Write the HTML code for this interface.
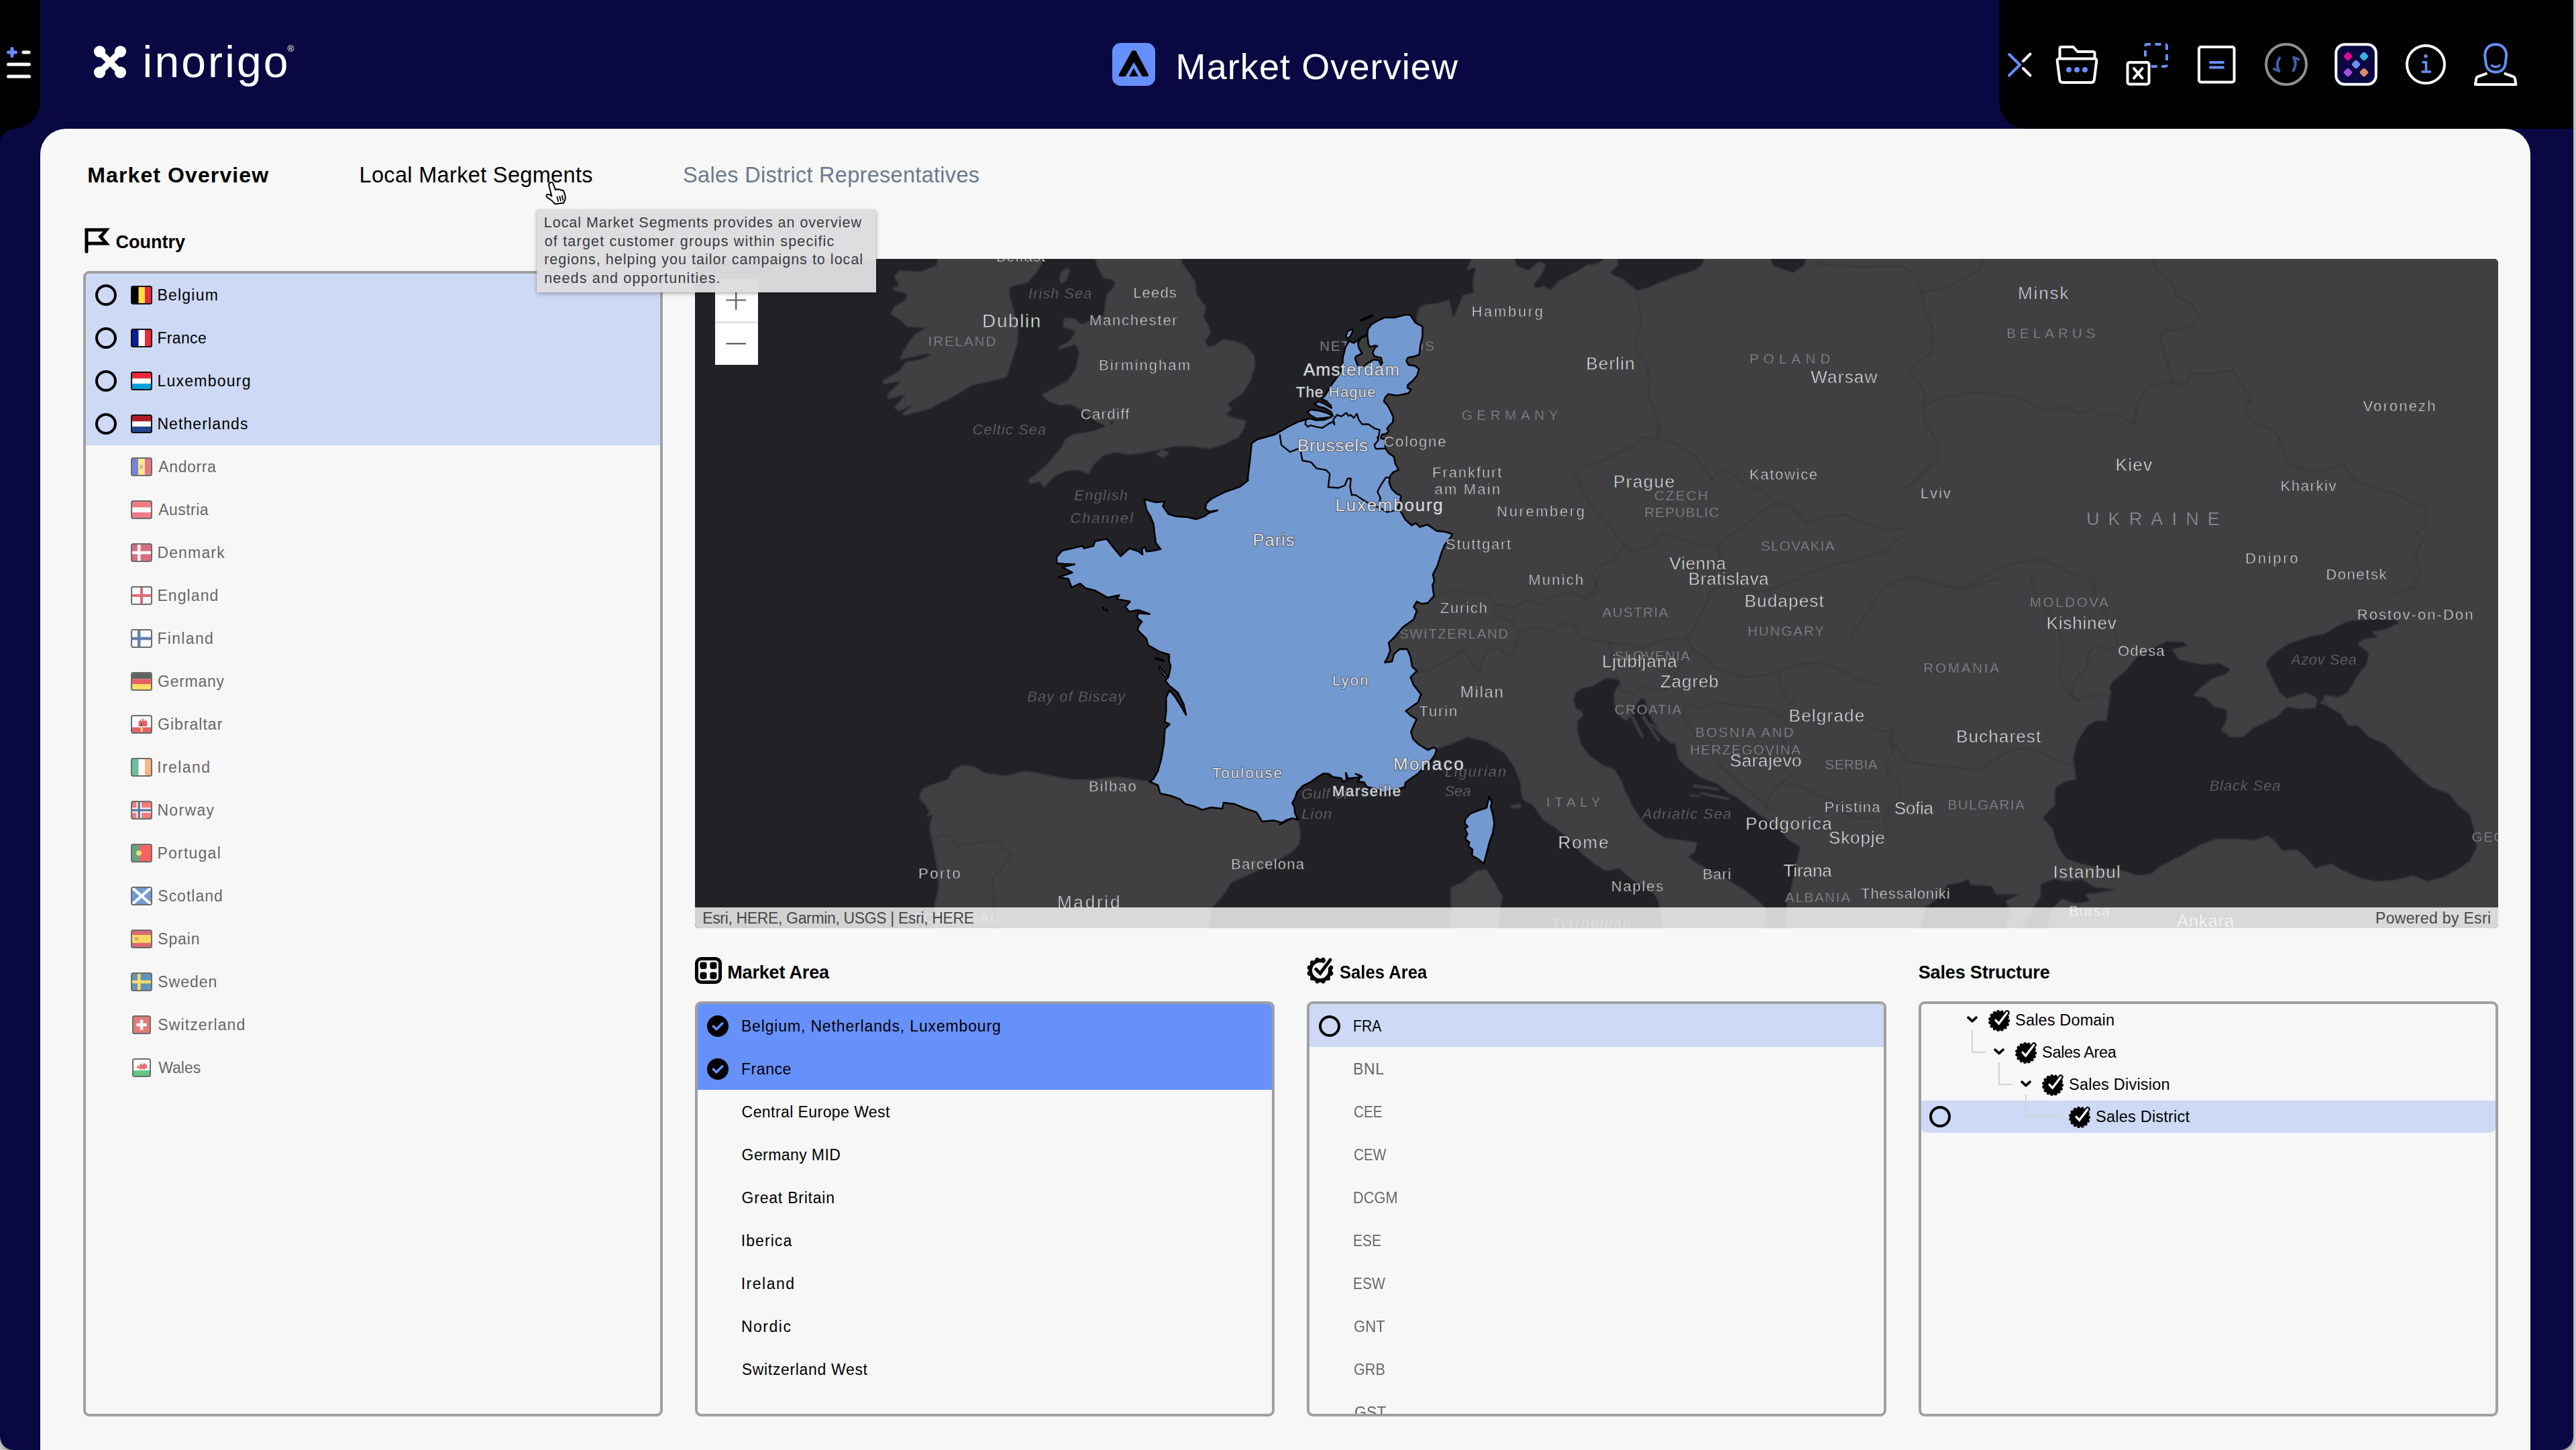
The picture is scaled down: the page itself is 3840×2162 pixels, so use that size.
<!DOCTYPE html>
<html lang="en"><head><meta charset="utf-8"><title>Market Overview</title>
<style>
*{box-sizing:border-box}
html,body{margin:0;padding:0}
body{width:3840px;height:2162px;overflow:hidden;background:#e9e9e9;font-family:'Liberation Sans',sans-serif;position:relative}
.t{position:absolute;white-space:nowrap;line-height:1}
.abs{position:absolute}
#win{position:absolute;left:0;top:0;width:3836px;height:2162px;background:#0a0842;border-radius:0 0 20px 20px;overflow:hidden}
#shadow{position:absolute;left:0;top:-40px;width:3836px;height:2202px;border-radius:0 0 20px 20px;box-shadow:0 6px 14px rgba(0,0,0,.45)}
#panel{position:absolute;left:60px;top:192px;width:3712px;height:1990px;background:#f7f7f7;border-radius:38px 38px 0 0}
.box{position:absolute;border:4px solid #a0a0a0;border-radius:9px;background:#f7f7f7;overflow:hidden}
.row{position:absolute;left:0;right:0}
.radio{position:absolute;width:32px;height:32px;border:4px solid #000;border-radius:50%}
.flag{position:absolute;width:32px;height:28px}
.dis{opacity:.62}
svg{position:absolute;overflow:visible}

#map{position:absolute;left:1036px;top:386px;width:2688px;height:998px;background:#3f3f42;border-radius:6px;overflow:hidden}
#map svg{left:0;top:0}
.lc{fill:#e2e2e2;stroke:#2e2e31;stroke-width:.65px;stroke-opacity:.9;stroke-linejoin:round}
.lb{fill:#dedede;stroke:#474c58;stroke-width:2.2px;stroke-opacity:.75;paint-order:stroke;stroke-linejoin:round}
.ln{fill:#96969a;stroke:#3f3f42;stroke-width:.6px}
.ls{fill:#74747a;font-style:italic;stroke:#232428;stroke-width:.6px}
</style></head>
<body>
<div id="shadow"></div>
<div id="win">

<!-- left black tab -->
<div class="abs" style="left:0;top:0;width:60px;height:192px;background:#000;border-radius:0 0 40px 0"></div>
<div class="abs" style="left:0;top:191px;width:26px;height:18px;background:#000"></div>
<div class="abs" style="left:0;top:192px;width:52px;height:36px;background:#0a0842;border-radius:26px 0 0 0/18px 0 0 0"></div>
<!-- right black area -->
<div class="abs" style="left:2980px;top:0;width:856px;height:192px;background:#000;border-radius:0 0 0 40px"></div>
<!-- menu icon -->
<svg style="left:0;top:60px" width="60" height="70" viewBox="0 60 60 70" fill="none" stroke-linecap="round" stroke-width="5">
<path d="M18 72.5v11M12.5 78h11" stroke="#6690fb"/>
<path d="M35 78h8M12.5 96h31M12.5 114h31" stroke="#fff"/>
</svg>
<!-- logo -->
<svg style="left:136px;top:64px" width="56" height="56" viewBox="136 64 56 56">
<g stroke="#fff" stroke-width="9.5" stroke-linecap="round"><path d="M149 77.5L179 107.5M179 77.5L149 107.5"/></g>
<g fill="#fff"><circle cx="148.5" cy="76.8" r="8.6"/><circle cx="179.5" cy="76.8" r="8.6"/><circle cx="148.5" cy="107.8" r="8.6"/><circle cx="179.5" cy="107.8" r="8.6"/></g>
</svg>
<!-- title icon -->
<svg style="left:1658px;top:64px" width="64" height="64" viewBox="0 0 64 64">
<rect width="64" height="64" rx="12.5" fill="#6690fb"/>
<path d="M30.600 13.400H34L52.300 48H45.900L32.300 25L18.700 48H11.500Z" fill="#000" stroke="#000" stroke-width="3.800" stroke-linejoin="round"/>
<path d="M32.1 37.6L39 49.9H25.2Z" fill="#000"/>
</svg>
<!-- toolbar icons -->
<svg style="left:2980px;top:50px" width="800" height="90" viewBox="2980 50 800 90" fill="none" stroke-width="4" stroke-linecap="round" stroke-linejoin="round">
<path d="M2995 81L3011 96.7L2995 112.5" stroke="#6690fb"/>
<path d="M3026.5 80.5L3016 91M3016 102L3026.5 112.5" stroke="#fff"/>
<g stroke="#fff"><path d="M3070.5 86V72.5Q3070.500 70 3073 70H3090.500L3097 77H3120Q3122.500 77 3122.500 79.500V86"/>
<path d="M3069.500 87.500H3122.500Q3125.800 87.500 3125.300 91L3121.800 119Q3121 123 3117.500 123H3074.500Q3071 123 3070.300 119L3066.700 91Q3066.300 87.500 3069.500 87.500Z"/></g>
<g fill="#6690fb" stroke="none"><circle cx="3084" cy="104" r="4"/><circle cx="3096" cy="104" r="4"/><circle cx="3108" cy="104" r="4"/></g>
<rect x="3198" y="66" width="32" height="33" rx="3" stroke="#6690fb" stroke-dasharray="9 6.5" stroke-dashoffset="4" stroke-linecap="butt"/>
<rect x="3171.500" y="93" width="32" height="32.500" rx="3" stroke="#fff" fill="#000"/>
<path d="M3181 102L3193.500 116.500M3193.500 102L3181 116.500" stroke="#fff"/>
<rect x="3278" y="70" width="52.500" height="52.500" rx="3" stroke="#fff"/>
<path d="M3295 93H3314M3295 100.500H3314" stroke="#6690fb"/>
<circle cx="3408" cy="96" r="30" stroke="#8f8f8f"/>
<g stroke="#4060a8"><path d="M3398 86.500Q3392 96 3397 105.500M3390 103L3397.500 106"/><path d="M3418.500 105.500Q3424.500 96 3419.500 86.500M3419 85.500L3426.500 88.500"/></g>
<rect x="3482.300" y="66.200" width="59.600" height="59.600" rx="13" stroke="#fff" fill="#0a0842"/>
<g stroke="none"><rect x="-5.2" y="-5.2" width="10.400" height="10.400" rx="3" transform="translate(3500 84) rotate(45)" fill="#e0058f"/>
<rect x="-5.2" y="-5.2" width="10.400" height="10.400" rx="3" transform="translate(3524 84) rotate(45)" fill="#3fb0e0"/>
<rect x="-5.2" y="-5.2" width="10.400" height="10.400" rx="3" transform="translate(3512 96) rotate(45)" fill="#6690fb"/>
<rect x="-5.2" y="-5.200" width="10.400" height="10.400" rx="3" transform="translate(3500 108) rotate(45)" fill="#a64fdc"/>
<rect x="-5.2" y="-5.200" width="10.400" height="10.400" rx="3" transform="translate(3524 108) rotate(45)" fill="#df8a68"/></g>
<circle cx="3616" cy="96" r="28" stroke="#fff"/>
<g stroke="#6690fb" stroke-width="3.600"><path d="M3612 92.700H3616.500V107M3611 107H3622.500"/></g><circle cx="3616" cy="83.800" r="2.700" fill="#6690fb"/>
<path d="M3720.200 66.200C3731 66.200 3737 74 3736 84.500L3734.500 96C3733 104 3727 107.500 3720.200 107.500C3713.400 107.500 3707.400 104 3705.900 96L3704.400 84.500C3703.400 74 3709.400 66.200 3720.200 66.200Z" stroke="#6690fb"/>
<path d="M3714.500 97.500Q3720.200 102 3726 97.500" stroke="#6690fb" stroke-width="3.400"/>
<path d="M3706 109.800L3693.500 114.300Q3691.700 115 3691.400 117L3690 126H3750.400L3749 117Q3748.700 115 3746.900 114.300L3734.400 109.800" stroke="#fff"/>
</svg>

<div id="panel"></div>
<svg style="left:124px;top:338px" width="44" height="42" viewBox="124 338 44 42"><path d="M126.500 340.200H163.900L153.300 352.900L163.900 365.600H131.500V375.100A2.500 2.500 0 0 1 126.500 375.100ZM131.500 345.300V360.600H153.100L146.300 352.800L153.600 345.300Z" fill="#000" fill-rule="evenodd"/></svg>
<svg style="left:1036px;top:1427px" width="40" height="40" viewBox="0 0 40 40"><rect x="2.500" y="2.500" width="35" height="35" rx="7" fill="none" stroke="#000" stroke-width="5"/><g fill="#000"><rect x="7.500" y="7.500" width="10" height="10.300" rx="3"/><rect x="22.400" y="7.500" width="10" height="10.300" rx="3"/><rect x="7.500" y="22.400" width="10" height="10.300" rx="3"/><rect x="22.400" y="22.400" width="10" height="10.300" rx="3"/></g></svg>
<svg style="left:0;top:0" width="10" height="10" viewBox="0 0 10 10"><g><g fill="#000"><circle cx="1984.0" cy="1451.4" r="3.300"/><circle cx="1979.7" cy="1458.8" r="3.300"/><circle cx="1972.3" cy="1463.1" r="3.300"/><circle cx="1963.7" cy="1463.1" r="3.300"/><circle cx="1956.3" cy="1458.8" r="3.300"/><circle cx="1952.0" cy="1451.4" r="3.300"/><circle cx="1952.0" cy="1442.8" r="3.300"/><circle cx="1956.3" cy="1435.4" r="3.300"/><circle cx="1963.7" cy="1431.1" r="3.300"/><circle cx="1972.3" cy="1431.1" r="3.300"/><circle cx="1979.7" cy="1435.4" r="3.300"/><circle cx="1984.0" cy="1442.8" r="3.300"/></g><circle cx="1968" cy="1447.1" r="14.700" fill="none" stroke="#000" stroke-width="5.400"/><path d="M1961.4 1444.8L1968 1451.3L1983.3 1430.8" fill="none" stroke="#f7f7f7" stroke-width="9.500" stroke-linecap="round"/><path d="M1961.6 1445.0L1968 1451.3L1983.1 1431.1" fill="none" stroke="#000" stroke-width="4.800" stroke-linecap="round" stroke-linejoin="miter"/></g></svg>
<div class="box" style="left:124px;top:404px;width:864px;height:1708px"><div class="row" style="top:0;height:256px;background:#cdd9f5"></div></div>
<div class="radio" style="left:142px;top:424px"></div>
<svg style="left:195px;top:426px" width="32" height="28" viewBox="0 0 32 28"><defs><clipPath id="fc1"><rect x="1" y="1" width="30" height="26" rx="2.500"/></clipPath></defs><g clip-path="url(#fc1)"><rect width="12" height="28" fill="#000"/><rect x="11.500" width="9.500" height="28" fill="#fae042"/><rect x="21" width="11" height="28" fill="#ed2939"/></g><rect x="1" y="1" width="30" height="26" rx="2.500" fill="none" stroke="#111" stroke-width="2"/></svg>
<div class="radio" style="left:142px;top:488px"></div>
<svg style="left:195px;top:490px" width="32" height="28" viewBox="0 0 32 28"><defs><clipPath id="fc2"><rect x="1" y="1" width="30" height="26" rx="2.500"/></clipPath></defs><g clip-path="url(#fc2)"><rect width="12" height="28" fill="#0a1e96"/><rect x="11.500" width="9.500" height="28" fill="#fff"/><rect x="21" width="11" height="28" fill="#ed2939"/></g><rect x="1" y="1" width="30" height="26" rx="2.500" fill="none" stroke="#111" stroke-width="2"/></svg>
<div class="radio" style="left:142px;top:552px"></div>
<svg style="left:195px;top:554px" width="32" height="28" viewBox="0 0 32 28"><defs><clipPath id="fc3"><rect x="1" y="1" width="30" height="26" rx="2.500"/></clipPath></defs><g clip-path="url(#fc3)"><rect width="32" height="10.500" fill="#ed2939"/><rect y="10.500" width="32" height="7.500" fill="#fff"/><rect y="18" width="32" height="10" fill="#00a1de"/></g><rect x="1" y="1" width="30" height="26" rx="2.500" fill="none" stroke="#111" stroke-width="2"/></svg>
<div class="radio" style="left:142px;top:616px"></div>
<svg style="left:195px;top:618px" width="32" height="28" viewBox="0 0 32 28"><defs><clipPath id="fc4"><rect x="1" y="1" width="30" height="26" rx="2.500"/></clipPath></defs><g clip-path="url(#fc4)"><rect width="32" height="10.500" fill="#ae1c28"/><rect y="10.500" width="32" height="7.500" fill="#fff"/><rect y="18" width="32" height="10" fill="#21468b"/></g><rect x="1" y="1" width="30" height="26" rx="2.500" fill="none" stroke="#111" stroke-width="2"/></svg>
<svg style="left:195px;top:682px" width="32" height="28" viewBox="0 0 32 28" opacity=".6"><defs><clipPath id="fc5"><rect x="1" y="1" width="30" height="26" rx="2.500"/></clipPath></defs><g clip-path="url(#fc5)"><rect width="12" height="28" fill="#2b35c4"/><rect x="11" width="10" height="28" fill="#fae042"/><rect x="21" width="11" height="28" fill="#d8203c"/><rect x="13.800" y="11" width="4.400" height="6" rx="1.200" fill="#c98a4a"/></g><rect x="1" y="1" width="30" height="26" rx="2.500" fill="none" stroke="#111" stroke-width="2"/></svg>
<svg style="left:195px;top:746px" width="32" height="28" viewBox="0 0 32 28" opacity=".6"><defs><clipPath id="fc6"><rect x="1" y="1" width="30" height="26" rx="2.500"/></clipPath></defs><g clip-path="url(#fc6)"><rect width="32" height="28" fill="#ed2939"/><rect y="10.500" width="32" height="7.500" fill="#fff"/></g><rect x="1" y="1" width="30" height="26" rx="2.500" fill="none" stroke="#111" stroke-width="2"/></svg>
<svg style="left:195px;top:810px" width="32" height="28" viewBox="0 0 32 28" opacity=".6"><defs><clipPath id="fc7"><rect x="1" y="1" width="30" height="26" rx="2.500"/></clipPath></defs><g clip-path="url(#fc7)"><rect width="32" height="28" fill="#c8102e"/><rect x="10" width="4.500" height="28" fill="#fff"/><rect y="11.800" width="32" height="4.500" fill="#fff"/></g><rect x="1" y="1" width="30" height="26" rx="2.500" fill="none" stroke="#111" stroke-width="2"/></svg>
<svg style="left:195px;top:874px" width="32" height="28" viewBox="0 0 32 28" opacity=".6"><defs><clipPath id="fc8"><rect x="1" y="1" width="30" height="26" rx="2.500"/></clipPath></defs><g clip-path="url(#fc8)"><rect width="32" height="28" fill="#fff"/><rect x="14" width="4" height="28" fill="#ce1124"/><rect y="12" width="32" height="4" fill="#ce1124"/></g><rect x="1" y="1" width="30" height="26" rx="2.500" fill="none" stroke="#111" stroke-width="2"/></svg>
<svg style="left:195px;top:938px" width="32" height="28" viewBox="0 0 32 28" opacity=".6"><defs><clipPath id="fc9"><rect x="1" y="1" width="30" height="26" rx="2.500"/></clipPath></defs><g clip-path="url(#fc9)"><rect width="32" height="28" fill="#fff"/><rect x="10" width="4.500" height="28" fill="#003580"/><rect y="11.800" width="32" height="4.500" fill="#003580"/></g><rect x="1" y="1" width="30" height="26" rx="2.500" fill="none" stroke="#111" stroke-width="2"/></svg>
<svg style="left:195px;top:1002px" width="32" height="28" viewBox="0 0 32 28" opacity=".6"><defs><clipPath id="fc10"><rect x="1" y="1" width="30" height="26" rx="2.500"/></clipPath></defs><g clip-path="url(#fc10)"><rect width="32" height="10.500" fill="#000"/><rect y="10.500" width="32" height="7.500" fill="#dd0000"/><rect y="18" width="32" height="10" fill="#ffce00"/></g><rect x="1" y="1" width="30" height="26" rx="2.500" fill="none" stroke="#111" stroke-width="2"/></svg>
<svg style="left:195px;top:1066px" width="32" height="28" viewBox="0 0 32 28" opacity=".6"><defs><clipPath id="fc11"><rect x="1" y="1" width="30" height="26" rx="2.500"/></clipPath></defs><g clip-path="url(#fc11)"><rect width="32" height="28" fill="#fff"/><rect y="18.500" width="32" height="9.500" fill="#da000c"/><path d="M11.500 17V9.500h2V7h1.500v2h2V5.500h2V9h2V7h1.500v2.500h2V17Z" fill="#da000c"/><rect x="14.800" y="12.500" width="2.600" height="4.500" fill="#000"/><path d="M15.500 18.500h1.500v6h-1.500zM14 21h3" stroke="#f8d80e" fill="#f8d80e" stroke-width="1.200"/></g><rect x="1" y="1" width="30" height="26" rx="2.500" fill="none" stroke="#111" stroke-width="2"/></svg>
<svg style="left:195px;top:1130px" width="32" height="28" viewBox="0 0 32 28" opacity=".6"><defs><clipPath id="fc12"><rect x="1" y="1" width="30" height="26" rx="2.500"/></clipPath></defs><g clip-path="url(#fc12)"><rect width="12" height="28" fill="#169b62"/><rect x="11.500" width="9.500" height="28" fill="#fff"/><rect x="21" width="11" height="28" fill="#ff883e"/></g><rect x="1" y="1" width="30" height="26" rx="2.500" fill="none" stroke="#111" stroke-width="2"/></svg>
<svg style="left:195px;top:1194px" width="32" height="28" viewBox="0 0 32 28" opacity=".6"><defs><clipPath id="fc13"><rect x="1" y="1" width="30" height="26" rx="2.500"/></clipPath></defs><g clip-path="url(#fc13)"><rect width="32" height="28" fill="#ef2b2d"/><rect x="8.500" width="7.500" height="28" fill="#fff"/><rect y="10.300" width="32" height="7.500" fill="#fff"/><rect x="10.500" width="3.500" height="28" fill="#002868"/><rect y="12.300" width="32" height="3.500" fill="#002868"/></g><rect x="1" y="1" width="30" height="26" rx="2.500" fill="none" stroke="#111" stroke-width="2"/></svg>
<svg style="left:195px;top:1258px" width="32" height="28" viewBox="0 0 32 28" opacity=".6"><defs><clipPath id="fc14"><rect x="1" y="1" width="30" height="26" rx="2.500"/></clipPath></defs><g clip-path="url(#fc14)"><rect width="32" height="28" fill="#ff0000"/><rect width="13" height="28" fill="#046a38"/><circle cx="12" cy="14" r="3.800" fill="#ffe900"/><circle cx="12" cy="14" r="1.500" fill="#e8a020"/></g><rect x="1" y="1" width="30" height="26" rx="2.500" fill="none" stroke="#111" stroke-width="2"/></svg>
<svg style="left:195px;top:1322px" width="32" height="28" viewBox="0 0 32 28" opacity=".6"><defs><clipPath id="fc15"><rect x="1" y="1" width="30" height="26" rx="2.500"/></clipPath></defs><g clip-path="url(#fc15)"><rect width="32" height="28" fill="#1a5fc0"/><path d="M0 0L32 28M32 0L0 28" stroke="#fff" stroke-width="4"/></g><rect x="1" y="1" width="30" height="26" rx="2.500" fill="none" stroke="#111" stroke-width="2"/></svg>
<svg style="left:195px;top:1386px" width="32" height="28" viewBox="0 0 32 28" opacity=".6"><defs><clipPath id="fc16"><rect x="1" y="1" width="30" height="26" rx="2.500"/></clipPath></defs><g clip-path="url(#fc16)"><rect width="32" height="28" fill="#c60b1e"/><rect y="8" width="32" height="12" fill="#ffc400"/><rect x="6" y="11.500" width="5.500" height="4.500" fill="#c8703a"/></g><rect x="1" y="1" width="30" height="26" rx="2.500" fill="none" stroke="#111" stroke-width="2"/></svg>
<svg style="left:195px;top:1450px" width="32" height="28" viewBox="0 0 32 28" opacity=".6"><defs><clipPath id="fc17"><rect x="1" y="1" width="30" height="26" rx="2.500"/></clipPath></defs><g clip-path="url(#fc17)"><rect width="32" height="28" fill="#005293"/><rect x="10" width="4.500" height="28" fill="#fecb00"/><rect y="11.800" width="32" height="4.500" fill="#fecb00"/></g><rect x="1" y="1" width="30" height="26" rx="2.500" fill="none" stroke="#111" stroke-width="2"/></svg>
<svg style="left:195px;top:1514px" width="32" height="28" viewBox="0 0 32 28" opacity=".6"><defs><clipPath id="fc18"><rect x="3" y="1" width="26" height="26" rx="2.500"/></clipPath></defs><g clip-path="url(#fc18)"><rect width="32" height="28" fill="#d52b1e"/><rect x="13.800" y="6.500" width="4.500" height="15" fill="#fff"/><rect x="8.500" y="11.800" width="15" height="4.500" fill="#fff"/></g><rect x="3" y="1" width="26" height="26" rx="2.500" fill="none" stroke="#111" stroke-width="2"/></svg>
<svg style="left:195px;top:1578px" width="32" height="28" viewBox="0 0 32 28" opacity=".6"><defs><clipPath id="fc19"><rect x="3" y="1" width="26" height="26" rx="2.500"/></clipPath></defs><g clip-path="url(#fc19)"><rect width="32" height="28" fill="#fff"/><rect y="18" width="32" height="10" fill="#00ab39"/><path d="M8 15.500l2-5 3 1.500 1.500-4.500 3 2.500 2.500-3.500 1.500 3 3-1-1 3.500 2 3.500-4-1-1.500 3-2.500-2.500-3 2.500-1-3-3 1.500 1-3Z" fill="#d4121c"/></g><rect x="3" y="1" width="26" height="26" rx="2.500" fill="none" stroke="#111" stroke-width="2"/></svg>
<div class="box" style="left:1036px;top:1493px;width:864px;height:619px"><div class="row" style="top:0;height:128px;background:#6690fb"></div></div>
<svg style="left:1054px;top:1514px" width="32" height="32" viewBox="0 0 32 32"><circle cx="16" cy="16" r="16" fill="#000"/><path d="M9.300 16.200L14 20.800L22.800 11.800" fill="none" stroke="#6690fb" stroke-width="3.600" stroke-linecap="round" stroke-linejoin="round"/></svg>
<svg style="left:1054px;top:1578px" width="32" height="32" viewBox="0 0 32 32"><circle cx="16" cy="16" r="16" fill="#000"/><path d="M9.300 16.200L14 20.800L22.800 11.800" fill="none" stroke="#6690fb" stroke-width="3.600" stroke-linecap="round" stroke-linejoin="round"/></svg>
<div class="box" style="left:1948px;top:1493px;width:864px;height:619px"><div class="row" style="top:0;height:64px;background:#cdd9f5"></div><span class="t" style="left:67px;top:598.3px;font-size:23px;color:#676767">GST</span></div>
<div class="radio" style="left:1966px;top:1514px"></div>
<div class="box" style="left:2860px;top:1493px;width:864px;height:619px"><div class="row" style="top:144px;height:48px;background:#cdd9f5;border-radius:0 0 8px 8px"></div></div>
<div class="radio" style="left:2876px;top:1649px"></div>
<svg style="left:0;top:0" width="10" height="10" viewBox="0 0 10 10"><path d="M2934 1517.2L2940 1522.6L2946 1517.2" fill="none" stroke="#000" stroke-width="3.800" stroke-linecap="round" stroke-linejoin="round"/><path d="M2940 1536V1569H2960" fill="none" stroke="#d3d3d3" stroke-width="2"/><g><g fill="#000"><circle cx="2993.6" cy="1522.0" r="2.500"/><circle cx="2992.4" cy="1527.5" r="2.500"/><circle cx="2989.1" cy="1532.1" r="2.500"/><circle cx="2984.2" cy="1534.9" r="2.500"/><circle cx="2978.6" cy="1535.5" r="2.500"/><circle cx="2973.2" cy="1533.8" r="2.500"/><circle cx="2969.0" cy="1530.0" r="2.500"/><circle cx="2966.7" cy="1524.8" r="2.500"/><circle cx="2966.7" cy="1519.2" r="2.500"/><circle cx="2969.0" cy="1514.0" r="2.500"/><circle cx="2973.2" cy="1510.2" r="2.500"/><circle cx="2978.6" cy="1508.5" r="2.500"/><circle cx="2984.2" cy="1509.1" r="2.500"/><circle cx="2989.1" cy="1511.9" r="2.500"/><circle cx="2992.4" cy="1516.5" r="2.500"/><circle cx="2980" cy="1522" r="13.800"/></g><path d="M2975.1 1521.3L2979.6 1526.2L2991.9 1510.1" fill="none" stroke="#000" stroke-width="7.600" stroke-linecap="round" stroke-linejoin="round"/><path d="M2975.1 1521.3L2979.6 1526.2L2991.9 1510.1" fill="none" stroke="#fff" stroke-width="3.300" stroke-linecap="round" stroke-linejoin="miter"/></g><path d="M2974 1565.2L2980 1570.6L2986 1565.2" fill="none" stroke="#000" stroke-width="3.800" stroke-linecap="round" stroke-linejoin="round"/><path d="M2980 1584V1617H3000" fill="none" stroke="#d3d3d3" stroke-width="2"/><g><g fill="#000"><circle cx="3033.6" cy="1570.0" r="2.500"/><circle cx="3032.4" cy="1575.5" r="2.500"/><circle cx="3029.1" cy="1580.1" r="2.500"/><circle cx="3024.2" cy="1582.9" r="2.500"/><circle cx="3018.6" cy="1583.5" r="2.500"/><circle cx="3013.2" cy="1581.8" r="2.500"/><circle cx="3009.0" cy="1578.0" r="2.500"/><circle cx="3006.7" cy="1572.8" r="2.500"/><circle cx="3006.7" cy="1567.2" r="2.500"/><circle cx="3009.0" cy="1562.0" r="2.500"/><circle cx="3013.2" cy="1558.2" r="2.500"/><circle cx="3018.6" cy="1556.5" r="2.500"/><circle cx="3024.2" cy="1557.1" r="2.500"/><circle cx="3029.1" cy="1559.9" r="2.500"/><circle cx="3032.4" cy="1564.5" r="2.500"/><circle cx="3020" cy="1570" r="13.800"/></g><path d="M3015.1 1569.3L3019.6 1574.2L3031.9 1558.1" fill="none" stroke="#000" stroke-width="7.600" stroke-linecap="round" stroke-linejoin="round"/><path d="M3015.1 1569.3L3019.6 1574.2L3031.9 1558.1" fill="none" stroke="#fff" stroke-width="3.300" stroke-linecap="round" stroke-linejoin="miter"/></g><path d="M3014 1613.2L3020 1618.6L3026 1613.2" fill="none" stroke="#000" stroke-width="3.800" stroke-linecap="round" stroke-linejoin="round"/><path d="M3020 1632V1665H3070" fill="none" stroke="#d3d3d3" stroke-width="2"/><g><g fill="#000"><circle cx="3073.6" cy="1618.0" r="2.500"/><circle cx="3072.4" cy="1623.5" r="2.500"/><circle cx="3069.1" cy="1628.1" r="2.500"/><circle cx="3064.2" cy="1630.9" r="2.500"/><circle cx="3058.6" cy="1631.5" r="2.500"/><circle cx="3053.2" cy="1629.8" r="2.500"/><circle cx="3049.0" cy="1626.0" r="2.500"/><circle cx="3046.7" cy="1620.8" r="2.500"/><circle cx="3046.7" cy="1615.2" r="2.500"/><circle cx="3049.0" cy="1610.0" r="2.500"/><circle cx="3053.2" cy="1606.2" r="2.500"/><circle cx="3058.6" cy="1604.5" r="2.500"/><circle cx="3064.2" cy="1605.1" r="2.500"/><circle cx="3069.1" cy="1607.9" r="2.500"/><circle cx="3072.4" cy="1612.5" r="2.500"/><circle cx="3060" cy="1618" r="13.800"/></g><path d="M3055.1 1617.3L3059.6 1622.2L3071.9 1606.1" fill="none" stroke="#000" stroke-width="7.600" stroke-linecap="round" stroke-linejoin="round"/><path d="M3055.1 1617.3L3059.6 1622.2L3071.9 1606.1" fill="none" stroke="#fff" stroke-width="3.300" stroke-linecap="round" stroke-linejoin="miter"/></g><g><g fill="#000"><circle cx="3113.6" cy="1666.0" r="2.500"/><circle cx="3112.4" cy="1671.5" r="2.500"/><circle cx="3109.1" cy="1676.1" r="2.500"/><circle cx="3104.2" cy="1678.9" r="2.500"/><circle cx="3098.6" cy="1679.5" r="2.500"/><circle cx="3093.2" cy="1677.8" r="2.500"/><circle cx="3089.0" cy="1674.0" r="2.500"/><circle cx="3086.7" cy="1668.8" r="2.500"/><circle cx="3086.7" cy="1663.2" r="2.500"/><circle cx="3089.0" cy="1658.0" r="2.500"/><circle cx="3093.2" cy="1654.2" r="2.500"/><circle cx="3098.6" cy="1652.5" r="2.500"/><circle cx="3104.2" cy="1653.1" r="2.500"/><circle cx="3109.1" cy="1655.9" r="2.500"/><circle cx="3112.4" cy="1660.5" r="2.500"/><circle cx="3100" cy="1666" r="13.800"/></g><path d="M3095.1 1665.3L3099.6 1670.2L3111.9 1654.1" fill="none" stroke="#000" stroke-width="7.600" stroke-linecap="round" stroke-linejoin="round"/><path d="M3095.1 1665.3L3099.6 1670.2L3111.9 1654.1" fill="none" stroke="#fff" stroke-width="3.300" stroke-linecap="round" stroke-linejoin="miter"/></g></svg>
<div id="map"><svg width="2688" height="998" viewBox="1036 386 2688 998"><defs><filter id="bl" x="-2%" y="-2%" width="104%" height="104%"><feGaussianBlur stdDeviation="1.3"/></filter></defs>
<g filter="url(#bl)">
<rect x="1000" y="350" width="2760" height="1070" fill="#3f3f42"/>
<path d="M1016 366L2202.2 366L2185.9 403.3L2199.9 398.6L2195.2 421.9L2197.5 435.9L2180.1 440.6L2169.6 468.5L2166.1 473.2L2160.3 447.5L2142.2 452.4L2125.2 454L2115.8 458.6L2112 471.1L2112.7 480.4L2120.5 486.6L2115.8 484.3L2109.6 481.1L2106.5 475.7L2101.9 469.5L2094.1 469.5L2078.6 473.4L2064.6 473.4L2055.3 477.3L2044.4 483.5L2039 491.2L2038.2 499L2028.9 503.7L2018 511.4L2011 508.3L2005.6 517.6L2001.7 533.2L2000.9 548.7L1996.3 558L1983.9 575.1L1974.5 590.6L1969.9 594.5L1977.6 598.4L1983.9 604.6L1984.6 608.5L1973 601.5L1965.2 598.4L1959.8 602.3L1965.2 606.1L1974.5 608.5L1983.9 613.9L1987 620.1L1977.6 615.5L1966.8 612.4L1954.3 610.8L1948.9 613.9L1952.8 618.6L1962.1 624L1973 623.2L1984.6 621.7L1974.5 625.9L1962.1 626.8L1952.8 624L1946.6 625.6L1935.7 628.7L1918.6 637.2L1900 648.1L1874 655.3L1865.8 661.1L1863.5 684.4L1860 712.4L1860.5 716.3L1848.8 725.6L1825.5 733.8L1806.9 743.1L1798.7 750.1L1796.4 758.2L1802.2 762.9L1815 761L1802.2 764.8L1795.3 769.9L1783.6 774.1L1769.6 771L1753.3 769.9L1741.7 766.4L1733.5 754.7L1735.9 747.7L1723 748.9L1713.7 746.6L1705.6 744.3L1709.1 760.6L1714.9 769.9L1719.6 781.5L1720.7 793.2L1723 809.5L1730 818.8L1718.4 821.1L1709.1 822.3L1706.7 815.3L1702.1 818.8L1703.2 826.9L1697.4 822.3L1683.4 817.6L1670.6 829.3L1659 815.3L1649.7 803.6L1632.2 807.1L1629.9 814.1L1615.9 817.6L1613.6 814.1L1583.3 821.1L1575.1 830.4L1575.1 839.8L1585.6 840.9L1601.9 841.6L1583.3 845.6L1598.4 853.7L1577.5 860.7L1592.6 863L1597.3 875.9L1610.1 870L1618.2 877L1632.2 880.5L1650.8 891L1668.3 887.5L1664.8 893.3L1684.6 896.8L1677.6 905L1683.4 912L1697.4 909.6L1713.7 915.5L1696.3 914.3L1695.1 921.3L1702.1 927.1L1696.3 935.3L1696.3 939.9L1709.1 952.7L1711.4 962L1727.7 971.4L1742.8 976L1742.8 986.5L1745.2 993.5L1741.7 1009.8L1737 1014.4L1744 1023.8L1745.2 1024L1755.7 1032.7L1764.5 1050.2L1768 1065.9L1761 1053.7L1752.2 1039.7L1743.5 1029.2L1738.3 1039.7L1738.3 1060.7L1736.5 1076.4L1743.5 1079.9L1736.5 1086.9L1734.8 1109.6L1731.3 1130.6L1726 1149.8L1719 1162L1713.8 1165.5L1692.8 1162L1664.9 1158.5L1629.9 1162L1595 1162L1567.1 1156.8L1542.6 1151.5L1525.1 1149.8L1500.7 1156.8L1469.2 1153.3L1451.8 1142.8L1434.3 1141L1420.3 1148L1413.3 1162L1392.4 1169L1374.9 1176L1369.7 1190L1380.1 1200.4L1385.4 1210.9L1380.1 1217.9L1390.6 1214.4L1385.4 1231.9L1388.9 1252.9L1395.9 1287.8L1399.4 1322.7L1392.4 1352.4L1385.4 1404L1016 1404Z" fill="#232428"/>
<path d="M2142.1 1116.6L2163.1 1109.6L2187.6 1099.1L2215.5 1106.1L2243.5 1123.6L2257.4 1144.5L2266.2 1165.5L2267.9 1183L2271.4 1193.5L2285.4 1200.4L2299.4 1221.4L2320.3 1235.4L2337.8 1249.4L2355.3 1270.3L2376.2 1287.8L2393.7 1298.3L2414.7 1294.8L2425.1 1305.3L2439.1 1315.7L2460.1 1326.2L2470.6 1340.2L2474 1352.4L2481 1404L1797.7 1404L1808.1 1352.4L1822.1 1336.7L1836.1 1315.7L1874.5 1298.3L1900 1283.9L1909.3 1280.5L1924.8 1271.2L1935.7 1260.3L1938.8 1246.3L1937.3 1232.4L1934.9 1222.3L1930.3 1212.2L1929.5 1202.9L1926.4 1197.4L1931.1 1188.9L1933.4 1181.1L1941.9 1171.8L1954.3 1165.6L1965.2 1157.8L1973 1153.2L1980.7 1153.9L1987 1158.6L1999.4 1160.2L2002.5 1165.6L2007.1 1163.3L2006.4 1152.4L2009.5 1160.9L2022.7 1159.4L2030.4 1158.6L2021.1 1153.9L2028.9 1157L2024.2 1165.6L2033.5 1166.4L2037.4 1173.4L2049.1 1175.7L2061.5 1181.9L2078.6 1178L2094.1 1173.4L2094.9 1167.1L2103.4 1160.9L2114.3 1153.2L2122 1144.6L2132.9 1134.5L2139.1 1125.2L2141.5 1117.5Z" fill="#232428"/>
<path d="M2345.9 1042.1L2350 1031.2L2360.9 1025.8L2374.5 1023L2388 1014.9L2394.8 1010.8L2409.8 1012.2L2416.6 1017.6L2409.8 1025.8L2405.7 1033.9L2407.1 1050.2L2412.5 1066.5L2423.4 1074.7L2430.2 1069.2L2439.7 1050.2L2446.5 1040.7L2453.3 1044.8L2456 1058.4L2464.1 1074.7L2475 1091L2488.6 1104.6L2496.7 1108.6L2502.2 1131.7L2515.8 1145.3L2534.8 1158.9L2562 1169.8L2578.3 1183.4L2589.1 1188.8L2616.3 1210.5L2632.6 1221.4L2657.1 1240.4L2662.7 1249.4L2683.7 1263.3L2676.7 1291.3L2669.7 1326.2L2662.7 1352.4L2659.2 1404L2638.3 1404L2631.3 1352.4L2620.8 1343.7L2599.8 1326.2L2564.9 1305.3L2529.9 1287.8L2516 1277.3L2526.5 1270.3L2529.9 1256.3L2509 1252.9L2481 1249.4L2456 1232.3L2442.4 1216L2434.2 1202.4L2423.4 1180.7L2415.2 1161.6L2407.1 1148L2388 1139.9L2369 1126.3L2356.8 1110L2351.4 1091L2351.4 1074.7L2360.9 1066.5L2358.2 1061.1L2348.6 1055.7Z" fill="#232428"/>
<path d="M3185.4 980.3L3213.3 964.6L3230.8 955.9L3255.3 957.6L3260.5 962.9L3237.8 968.1L3248.3 983.8L3283.2 990.8L3307.7 989.1L3325.1 997.8L3318.1 1004.8L3297.2 1011.8L3276.2 1029.2L3269.2 1038L3286.7 1039.7L3300.7 1053.7L3318.1 1057.2L3319.9 1071.2L3311.2 1088.6L3325.1 1099.1L3342.6 1099.1L3360.1 1085.1L3381 1074.7L3395 1067.7L3409 1053.7L3429.9 1057.2L3450.9 1055.5L3454.4 1046.7L3464.9 1050.2L3471.9 1053.7L3489.3 1064.2L3499.8 1081.7L3515.5 1081.7L3531.3 1099.1L3555.7 1109.6L3576.7 1130.6L3597.7 1151.5L3622.1 1172.5L3650.1 1183L3664 1200.4L3681.5 1214.4L3688.5 1238.9L3692 1263.3L3681.5 1284.3L3660.5 1298.3L3639.6 1308.8L3618.6 1314L3597.7 1305.3L3569.7 1312.2L3541.8 1314L3517.3 1308.8L3492.8 1298.3L3475.4 1287.8L3450.9 1294.8L3436.9 1277.3L3423 1266.8L3402 1268.6L3389.8 1252.9L3381 1245.9L3360.1 1252.9L3332.1 1251.1L3304.2 1251.1L3279.7 1259.8L3255.3 1273.8L3220.3 1291.3L3206.3 1303.5L3185.4 1305.3L3164.4 1298.3L3133 1294.8L3101.5 1287.8L3080.6 1280.8L3066.6 1259.8L3059.6 1235.4L3045.6 1219.7L3056.1 1207.4L3063.1 1200.4L3063.1 1176L3077.1 1165.5L3094.5 1162L3091 1130.6L3096.3 1106.1L3112 1081.7L3126 1074.7L3140 1074.7L3143.5 1050.2L3146.9 1032.7L3143.5 1025.8L3150.4 1015.3L3167.9 1001.3Z" fill="#232428"/>
<path d="M3381 983.8L3395 969.9L3412.5 959.4L3443.9 948.9L3464.9 945.4L3482.4 934.9L3499.8 926.2L3534.8 922.7L3569.7 924.4L3576.7 927.9L3555.7 938.4L3534.8 941.9L3545.2 950.6L3524.3 952.4L3513.8 959.4L3531.3 973.3L3527.8 990.8L3513.8 1008.3L3499.8 1032.7L3485.8 1039.7L3464.9 1036.2L3463.1 1045L3454.4 1048.5L3452.7 1039.7L3436.9 1032.7L3409 1041.5L3398.5 1032.7L3388 1011.8L3377.5 990.8Z" fill="#232428"/>
<path d="M3042.1 1319.2L3059.6 1310.5L3080.6 1314L3101.5 1310.5L3122.5 1322.7L3153.9 1326.2L3126 1331.5L3108.5 1333.2L3115.5 1343.7L3094.5 1347.2L3073.6 1340.2L3059.6 1354.2L3045.6 1404L3003.7 1404L3031.7 1352.4L3042.1 1336.7Z" fill="#232428"/>
<path d="M2857 1404L2870.9 1352.4L2891.9 1336.7L2902.4 1319.2L2923.3 1315.7L2933.8 1310.5L2937.3 1319.2L2968.8 1321L2975.8 1333.2L3010.7 1333.2L2989.7 1343.7L2996.7 1357.7L2982.7 1404Z" fill="#232428"/>
<path d="M2253.4 366L2260.4 396.3L2279.1 403.3L2293 390.5L2304.7 394L2297.7 410.3L2286.1 424.3L2288.4 430.1L2302.4 426.6L2311.7 432.4L2323.3 419.6L2339.6 410.3L2353.6 403.3L2365.3 395.1L2376.9 394L2388.5 389.3L2390.9 366Z" fill="#232428"/>
<path d="M2409.5 366L2411.8 396.3L2400.2 405.6L2404.8 410.3L2421.2 417.3L2439.8 433.6L2456.1 428.9L2479.4 419.6L2502.7 410.3L2526 403.3L2537.6 394L2544.6 366Z" fill="#232428"/>
<path d="M2635.4 366L2642.4 396.3L2672.7 406.8L2689 396.3L2698.3 366Z" fill="#232428"/>
<path d="M1401.1 366L1395.9 396.5L1371.4 405.2L1340 403.5L1333 412.2L1340 424.4L1329.5 431.4L1352.2 438.4L1350.4 447.1L1333 457.6L1327.7 468.1L1343.5 478.6L1352.2 487.3L1380.1 489.1L1362.7 499.5L1346.9 522.3L1341.7 536.2L1381.9 527.5L1388.9 529.2L1371.4 536.2L1350.4 539.7L1340 553.7L1315.5 567.7L1317.3 572.9L1343.5 567.7L1322.5 588.6L1324.2 595.6L1350.4 586.9L1333 607.9L1340 613.1L1362.7 602.6L1345.2 616.6L1346.9 620.1L1385.4 609.6L1420.3 592.1L1448.3 574.7L1486.7 565.9L1500.7 562.4L1505.9 546.7L1516.4 511.8L1518.1 490.8L1509.4 455.9L1504.2 438.4L1505.9 427.9L1532.1 420.9L1544.4 407L1553.1 393L1560.1 366Z" fill="#3f3f42"/>
<path d="M1579.3 419.2L1581 407L1591.5 398.2L1595 403.5L1589.8 417.4L1582.8 422.7Z" fill="#3f3f42"/>
<path d="M1626.5 366L1636.9 400L1645.7 415.7L1654.4 415.7L1663.1 420.9L1657.9 431.4L1649.2 438.4L1647.4 455.9L1645.7 469.9L1612.5 483.8L1602 475.1L1586.3 473.3L1584.5 487.3L1595 490.8L1603.7 494.3L1595 508.3L1575.8 518.8L1581 520.5L1603.7 513.5L1609 525.8L1603.7 550.2L1591.5 567.7L1553.1 588.6L1563.6 599.1L1581 604.4L1595 602.6L1609 609.6L1636.9 630.6L1650.9 635.8L1657.9 627.1L1661.4 630.6L1629.9 642.8L1598.5 648L1588 655L1581 669L1556.6 696.9L1539.1 710.9L1532.1 716.2L1535.6 721.4L1549.6 717.9L1556.6 726.6L1570.6 710.9L1588 702.2L1609 700.4L1623 707.4L1629.9 693.5L1643.9 679.5L1661.4 674.2L1682.4 677.7L1699.8 676L1720.8 672.5L1748.7 665.5L1776.7 665.5L1804.6 669L1825.6 662L1846.6 651.5L1855.3 637.6L1857 627.1L1839.6 623.6L1827.3 618.3L1836.1 609.6L1829.1 602.6L1839.6 595.6L1853.6 585.1L1864 567.7L1871 546.7L1869.3 529.2L1857 515.3L1839.6 508.3L1822.1 506.5L1811.6 515.3L1801.1 517L1795.9 508.3L1804.6 497.8L1802.9 487.3L1794.2 473.3L1797.7 455.9L1792.4 450.6L1783.7 438.4L1781.9 420.9L1773.2 407L1762.7 393L1755.7 366Z" fill="#3f3f42"/>
<path d="M1722.5 676.7L1733 670.7L1743.5 676L1733 683Z" fill="#3f3f42"/>
<path d="M2163.1 1322.7L2180.6 1315.7L2201.5 1298.3L2215.5 1296.5L2226 1312.2L2240 1336.7L2236.5 1352.4L2233 1404L2159.6 1404L2163.1 1352.4Z" fill="#3f3f42"/>
<path d="M2252.2 1200.4L2266.2 1198.7L2267.9 1203.9L2253.9 1205.7Z" fill="#3f3f42"/>
<path d="M2434.2 1066.5L2450.5 1099.1L2447.3 1100.8L2431 1069.2Z" fill="#3f3f42"/>
<path d="M2450.5 1066.5L2475 1104.6L2471.7 1106.2L2447.3 1069.2Z" fill="#3f3f42"/>
<path d="M2461.4 1077.4L2494 1107.3L2492.4 1110L2459.8 1080.1Z" fill="#3f3f42"/>
<path d="M2523.9 1169.8L2562 1175.2L2562 1178.5L2523.9 1173Z" fill="#3f3f42"/>
<path d="M2534.8 1180.7L2578.3 1190.2L2578.3 1193.4L2534.8 1183.9Z" fill="#3f3f42"/>
<path d="M2518.5 1184.7L2534.8 1186.1L2534.8 1188.3L2518.5 1187.2Z" fill="#3f3f42"/>
<path d="M2390.9 366L2393.2 394L2402.5 397.5L2409.5 394L2408.3 366Z" fill="#3f3f42"/>
<path d="M2439.1 431.4L2442.6 455.9L2447.8 483.8L2437.4 508.3L2439.1 522.3L2453.1 539.7L2460.1 567.7L2456.6 588.6L2467.1 613.1L2474 637.6L2470.6 655" fill="none" stroke="#38383b" stroke-width="2.2" stroke-linejoin="round"/>
<path d="M2470.6 655L2446.1 651.5L2439.1 662L2418.1 672.5L2390.2 686.5L2369.2 693.5L2344.8 703.9L2355.3 717.9L2360.5 735.4L2372.7 756.3L2390.2 773.8L2407.7 794.8L2421.6 812.2" fill="none" stroke="#38383b" stroke-width="2.2" stroke-linejoin="round"/>
<path d="M2470.6 655L2491.5 658.5L2509 669L2526.5 679.5L2536.9 693.5L2550.9 714.4L2564.9 700.4L2582.4 707.4L2599.8 721.4L2620.8 728.4L2634.8 738.9L2645.2 749.4" fill="none" stroke="#38383b" stroke-width="2.2" stroke-linejoin="round"/>
<path d="M2421.6 812.2L2435.6 822.7L2460.1 815.7L2477.5 794.8L2502 801.8L2529.9 812.2L2561.4 815.7" fill="none" stroke="#38383b" stroke-width="2.2" stroke-linejoin="round"/>
<path d="M2561.4 815.7L2578.9 798.3L2599.8 784.3L2620.8 766.8L2645.2 749.4" fill="none" stroke="#38383b" stroke-width="2.2" stroke-linejoin="round"/>
<path d="M2645.2 749.4L2669.7 756.3L2694.2 780.8L2722.1 770.3L2750.1 766.8L2781.5 780.8L2809.5 791.3L2836 787.8" fill="none" stroke="#38383b" stroke-width="2.2" stroke-linejoin="round"/>
<path d="M2421.6 812.2L2407.7 833.2L2386.7 843.7L2372.7 854.2L2379.7 875.1L2369.2 886" fill="none" stroke="#38383b" stroke-width="2.2" stroke-linejoin="round"/>
<path d="M2561.4 815.7L2564.9 840.2L2575.4 864.7L2582.4 886" fill="none" stroke="#38383b" stroke-width="2.2" stroke-linejoin="round"/>
<path d="M2582.4 875.1L2617.3 882.1L2652.2 875.1L2697.7 854.2L2739.6 840.2L2774.5 833.2L2809.5 822.7L2836 798.3" fill="none" stroke="#38383b" stroke-width="2.2" stroke-linejoin="round"/>
<path d="M2704.6 393L2774.5 398.2L2836 396.5" fill="none" stroke="#38383b" stroke-width="2.2" stroke-linejoin="round"/>
<path d="M2836 396.5L2857 414L2864 434.9L2870.9 466.4L2881.4 490.8L2879.7 525.8L2857 539.7L2846.5 557.2L2864 574.7L2870.9 588.6L2865.7 606.1" fill="none" stroke="#38383b" stroke-width="2.2" stroke-linejoin="round"/>
<path d="M2864 434.9L2898.9 431.4L2923.3 417.4L2951.3 403.5L2958.3 386" fill="none" stroke="#38383b" stroke-width="2.2" stroke-linejoin="round"/>
<path d="M2865.7 606.1L2898.9 592.1L2940.8 585.1L2975.8 586.9L3017.7 595.6L3031.7 606.1L3052.6 613.1L3077.1 606.1L3098 616.6L3119 609.6L3129.5 620.1L3150.4 616.6L3171.4 627.1L3181.9 630.6L3185.4 602.6L3199.4 578.2L3220.3 571.2L3237.8 569.4" fill="none" stroke="#38383b" stroke-width="2.2" stroke-linejoin="round"/>
<path d="M3237.8 569.4L3230.8 539.7L3220.3 508.3L3223.8 490.8L3248.3 494.3L3269.2 483.8L3279.7 469.9L3265.7 452.4L3244.8 441.9L3237.8 420.9L3216.8 403.5L3206.3 386" fill="none" stroke="#38383b" stroke-width="2.2" stroke-linejoin="round"/>
<path d="M3237.8 569.4L3255.3 574.7L3265.7 557.2L3297.2 557.2L3328.6 552L3342.6 574.7L3356.6 595.6L3346.1 606.1L3353.1 627.1L3381 637.6L3395 648L3402 669L3412.5 693.5L3436.9 700.4L3461.4 703.9L3492.8 693.5L3510.3 714.4L3534.8 724.9L3569.7 735.4L3594.2 749.4L3618.6 756.3L3615.1 784.3L3601.1 794.8L3611.6 805.3L3601.1 826.2L3608.1 850.7L3597.7 875.1L3569.7 886" fill="none" stroke="#38383b" stroke-width="2.2" stroke-linejoin="round"/>
<path d="M2865.7 606.1L2870.9 630.6L2888.4 662L2888.4 686.5L2870.9 700.4L2853.5 717.9L2836 731.9" fill="none" stroke="#38383b" stroke-width="2.2" stroke-linejoin="round"/>
<path d="M2836 857.7L2870.9 868.1L2923.3 878.6L2975.8 850.7L3003.7 840.2L3045.6 833.2L3073.6 847.2L3115.5 868.1L3122.5 886" fill="none" stroke="#38383b" stroke-width="2.2" stroke-linejoin="round"/>
<path d="M2138 889.9L2154.3 884.5L2176.1 879L2192.4 887.2L2214.1 881.7L2227.7 900.8L2225 914.3L2241.3 922.5L2252.2 927.9L2263 914.3" fill="none" stroke="#38383b" stroke-width="2.2" stroke-linejoin="round"/>
<path d="M2227.7 900.8L2257.6 906.2L2273.9 895.3L2295.7 900.8L2317.4 887.2L2344.6 884.5L2360.9 892.6L2382.6 881.7L2379.9 865.4L2385.3 860" fill="none" stroke="#38383b" stroke-width="2.2" stroke-linejoin="round"/>
<path d="M2100 1004L2127.2 998.6L2146.2 990.4L2167.9 979.6L2178.8 968.7L2195.1 987.7L2203.3 1004L2208.7 987.7L2216.8 968.7L2235.9 966L2246.7 979.6L2260.3 963.3L2265.8 941.5L2252.2 927.9" fill="none" stroke="#38383b" stroke-width="2.2" stroke-linejoin="round"/>
<path d="M2265.8 941.5L2290.2 936.1L2314.7 941.5L2333.7 927.9L2347.3 933.4L2355.4 949.7L2377.2 955.1L2398.9 957.8" fill="none" stroke="#38383b" stroke-width="2.2" stroke-linejoin="round"/>
<path d="M2398.9 957.8L2426.1 960.5L2450.5 966L2475 955.1L2494 952.4L2513 949.7" fill="none" stroke="#38383b" stroke-width="2.2" stroke-linejoin="round"/>
<path d="M2513 949.7L2523.9 938.8L2534.8 914.3L2545.7 898L2548.4 881.7L2567.4 873.6L2578.3 860" fill="none" stroke="#38383b" stroke-width="2.2" stroke-linejoin="round"/>
<path d="M2398.9 957.8L2404.3 976.8L2398.9 990.4L2407.1 1006.7L2409.8 1012.2" fill="none" stroke="#38383b" stroke-width="2.2" stroke-linejoin="round"/>
<path d="M2416.6 1017.6L2415.2 1031.2L2434.2 1033.9L2453.3 1020.3L2464.1 1028.5L2480.4 1031.2L2494 1014.9L2499.5 1001.3L2507.6 987.7L2523.9 968.7L2513 949.7" fill="none" stroke="#38383b" stroke-width="2.2" stroke-linejoin="round"/>
<path d="M2523.9 968.7L2540.2 979.6L2556.5 995.9L2578.3 1004L2602.7 1009.5L2629.9 1006.7L2651.6 1001.3" fill="none" stroke="#38383b" stroke-width="2.2" stroke-linejoin="round"/>
<path d="M2651.6 1001.3L2684.2 990.4L2716.8 987.7L2738.6 995.9L2765.8 1012.2L2800 1023" fill="none" stroke="#38383b" stroke-width="2.2" stroke-linejoin="round"/>
<path d="M2651.6 1001.3L2654.3 1020.3L2662.5 1039.3L2673.4 1047.5L2665.2 1055.7L2657.1 1069.2" fill="none" stroke="#38383b" stroke-width="2.2" stroke-linejoin="round"/>
<path d="M2513 1050.2L2534.8 1055.7L2556.5 1047.5L2578.3 1050.2L2602.7 1052.9L2629.9 1055.7L2657.1 1069.2" fill="none" stroke="#38383b" stroke-width="2.2" stroke-linejoin="round"/>
<path d="M2513 1050.2L2510.3 1072L2523.9 1091L2545.7 1118.2L2562 1139.9L2586.4 1161.6L2608.2 1180.7L2629.9 1199.7L2643.5 1210.5" fill="none" stroke="#38383b" stroke-width="2.2" stroke-linejoin="round"/>
<path d="M2657.1 1069.2L2667.9 1085.5L2657.1 1104.6L2670.7 1120.9L2659.8 1142.6L2670.7 1156.2L2654.3 1167.1" fill="none" stroke="#38383b" stroke-width="2.2" stroke-linejoin="round"/>
<path d="M2654.3 1167.1L2638 1186.1L2632.6 1202.4L2643.5 1210.5" fill="none" stroke="#38383b" stroke-width="2.2" stroke-linejoin="round"/>
<path d="M2654.3 1167.1L2684.2 1172.5L2711.4 1186.1L2733.2 1194.2L2752.2 1213.3L2773.9 1221.4L2800 1218.7" fill="none" stroke="#38383b" stroke-width="2.2" stroke-linejoin="round"/>
<path d="M2760 949.7L2776.3 922.5L2795.3 895.3L2808.9 876.3L2830.7 865.4L2855.1 860" fill="none" stroke="#38383b" stroke-width="2.2" stroke-linejoin="round"/>
<path d="M2855.1 860L2890.4 868.2L2928.5 879L2950.2 870.9L2985.5 860" fill="none" stroke="#38383b" stroke-width="2.2" stroke-linejoin="round"/>
<path d="M3026.3 860L3037.2 887.2L3058.9 922.5L3072.5 947L3075.2 974.1L3069.8 1001.3L3075.2 1023L3094.2 1044.8" fill="none" stroke="#38383b" stroke-width="2.2" stroke-linejoin="round"/>
<path d="M3121.4 860L3124.1 892.6L3140.4 919.8L3154 944.2L3156.7 963.3L3140.4 968.7L3124.1 963.3L3113.3 974.1L3110.5 995.9L3094.2 1012.2L3086.1 1028.5L3094.2 1044.8L3121.4 1036.6L3140.4 1033.9L3145.9 1044.8" fill="none" stroke="#38383b" stroke-width="2.2" stroke-linejoin="round"/>
<path d="M2817.1 1104.6L2833.4 1120.9L2841.5 1134.5L2868.7 1139.9L2895.9 1142.6L2923 1145.3L2950.2 1148L2972 1134.5L2991 1120.9L3018.2 1115.4L3045.3 1123.6L3067.1 1134.5L3091.5 1139.9" fill="none" stroke="#38383b" stroke-width="2.2" stroke-linejoin="round"/>
<path d="M2760 1050.2L2776.3 1077.4L2803.5 1091L2822.5 1088.3L2817.1 1104.6L2822.5 1118.2L2811.6 1134.5L2814.3 1153.5L2833.4 1172.5L2830.7 1191.5L2814.3 1210.5L2808.9 1226.8L2814.3 1249.9" fill="none" stroke="#38383b" stroke-width="2.2" stroke-linejoin="round"/>
<path d="M1388.9 1252.9L1406.3 1244.1L1420.3 1249.4L1423.8 1261.6L1455.3 1256.3L1486.7 1252.9L1497.2 1266.8L1507.7 1273.8L1493.7 1294.8L1479.7 1308.8L1481.5 1340.2L1483.2 1386" fill="none" stroke="#38383b" stroke-width="2.2" stroke-linejoin="round"/>
</g>
<g font-family="'Liberation Sans',sans-serif"><text class="ls" x="1533.0" y="445.4" font-size="21.5" textLength="94.2" lengthAdjust="spacing">Irish Sea</text><text class="ln" x="1383.5" y="516.0" font-size="20.5" textLength="100.7" lengthAdjust="spacing">IRELAND</text><text class="ls" x="1449.8" y="648.0" font-size="21.5" textLength="109.2" lengthAdjust="spacing">Celtic Sea</text><text class="ls" x="1601.3" y="745.9" font-size="21.5" textLength="79.6" lengthAdjust="spacing">English</text><text class="ls" x="1595.6" y="779.8" font-size="21.5" textLength="93.2" lengthAdjust="spacing">Channel</text><text class="ln" x="1967.3" y="523.0" font-size="20.5" textLength="170.6" lengthAdjust="spacing">NETHERLANDS</text><text class="ln" x="2607.9" y="541.5" font-size="20.5" textLength="120.4" lengthAdjust="spacing">POLAND</text><text class="ln" x="2178.9" y="626.4" font-size="20.5" textLength="143.6" lengthAdjust="spacing">GERMANY</text><text class="ln" x="2466.0" y="745.9" font-size="20.5" textLength="79.7" lengthAdjust="spacing">CZECH</text><text class="ln" x="2451.3" y="771.4" font-size="20.5" textLength="110.9" lengthAdjust="spacing">REPUBLIC</text><text class="ln" x="2625.1" y="821.0" font-size="20.5" textLength="109.3" lengthAdjust="spacing">SLOVAKIA</text><text class="ln" x="2991.3" y="503.7" font-size="20.5" textLength="132.1" lengthAdjust="spacing">BELARUS</text><text class="ln" x="3109.9" y="782.5" font-size="27" textLength="198.9" lengthAdjust="spacing">UKRAINE</text><text class="ls" x="1531.3" y="1046.0" font-size="21.5" textLength="145.6" lengthAdjust="spacing">Bay of Biscay</text><text class="ln" x="1362.3" y="1375.8" font-size="20.5" textLength="125.1" lengthAdjust="spacing">PORTUGAL</text><text class="ln" x="2086.1" y="951.7" font-size="20.5" textLength="161.9" lengthAdjust="spacing">SWITZERLAND</text><text class="ln" x="2388.5" y="920.0" font-size="20.5" textLength="97.9" lengthAdjust="spacing">AUSTRIA</text><text class="ln" x="2605.1" y="948.2" font-size="20.5" textLength="113.9" lengthAdjust="spacing">HUNGARY</text><text class="ln" x="2406.8" y="984.9" font-size="20.5" textLength="112.1" lengthAdjust="spacing">SLOVENIA</text><text class="ln" x="2406.7" y="1064.9" font-size="20.5" textLength="99.6" lengthAdjust="spacing">CROATIA</text><text class="ln" x="2527.3" y="1099.0" font-size="20.5" textLength="146.2" lengthAdjust="spacing">BOSNIA AND</text><text class="ln" x="2519.3" y="1125.3" font-size="20.5" textLength="164.4" lengthAdjust="spacing">HERZEGOVINA</text><text class="ln" x="2720.5" y="1147.3" font-size="20.5" textLength="77.9" lengthAdjust="spacing">SERBIA</text><text class="ls" x="2153.7" y="1157.8" font-size="21.5" textLength="91.2" lengthAdjust="spacing">Ligurian</text><text class="ls" x="2153.4" y="1186.5" font-size="21.5" textLength="39.0" lengthAdjust="spacing">Sea</text><text class="ls" x="1939.9" y="1190.7" font-size="21.5" textLength="69.2" lengthAdjust="spacing">Gulf of</text><text class="ls" x="1940.3" y="1220.7" font-size="21.5" textLength="44.6" lengthAdjust="spacing">Lion</text><text class="ln" x="2305.1" y="1203.0" font-size="20.5" textLength="80.3" lengthAdjust="spacing">ITALY</text><text class="ls" x="2447.9" y="1220.7" font-size="21.5" textLength="132.5" lengthAdjust="spacing">Adriatic Sea</text><text class="ln" x="2661.0" y="1345.4" font-size="20.5" textLength="96.9" lengthAdjust="spacing">ALBANIA</text><text class="ls" x="2313.1" y="1384.0" font-size="21.5" textLength="117.9" lengthAdjust="spacing">Tyrrhenian</text><text class="ln" x="3025.8" y="905.2" font-size="20.5" textLength="117.0" lengthAdjust="spacing">MOLDOVA</text><text class="ln" x="2867.3" y="1003.0" font-size="20.5" textLength="112.7" lengthAdjust="spacing">ROMANIA</text><text class="ls" x="3415.1" y="990.8" font-size="21.5" textLength="97.7" lengthAdjust="spacing">Azov Sea</text><text class="ls" x="3293.7" y="1178.8" font-size="21.5" textLength="105.5" lengthAdjust="spacing">Black Sea</text><text class="ln" x="2903.5" y="1207.4" font-size="20.5" textLength="114.2" lengthAdjust="spacing">BULGARIA</text><text class="ln" x="3684.7" y="1254.6" font-size="20.5" textLength="105.4" lengthAdjust="spacing">GEORGIA</text></g>
<path d="M2120.5 486.6L2115.8 484.3L2109.6 481.1L2106.5 475.7L2101.9 469.5L2094.1 469.5L2078.6 473.4L2064.6 473.4L2055.3 477.3L2044.4 483.5L2039 491.2L2038.2 499L2028.9 503.7L2018 511.4L2011 508.3L2005.6 517.6L2001.7 533.2L2000.9 548.7L1996.3 558L1983.9 575.1L1974.5 590.6L1969.9 594.5L1977.6 598.4L1983.9 604.6L1984.6 608.5L1973 601.5L1965.2 598.4L1959.8 602.3L1965.2 606.1L1974.5 608.5L1983.9 613.9L1987 620.1L1977.6 615.5L1966.8 612.4L1954.3 610.8L1948.9 613.9L1952.8 618.6L1962.1 624L1973 623.2L1984.6 621.7L1974.5 625.9L1962.1 626.8L1952.8 624L1946.6 625.6L1935.7 628.7L1918.6 637.2L1900 648.1L1874 655.3L1865.8 661.1L1863.5 684.4L1860 712.4L1860.5 716.3L1848.8 725.6L1825.5 733.8L1806.9 743.1L1798.7 750.1L1796.4 758.2L1802.2 762.9L1815 761L1802.2 764.8L1795.3 769.9L1783.6 774.1L1769.6 771L1753.3 769.9L1741.7 766.4L1733.5 754.7L1735.9 747.7L1723 748.9L1713.7 746.6L1705.6 744.3L1709.1 760.6L1714.9 769.9L1719.6 781.5L1720.7 793.2L1723 809.5L1730 818.8L1718.4 821.1L1709.1 822.3L1706.7 815.3L1702.1 818.8L1703.2 826.9L1697.4 822.3L1683.4 817.6L1670.6 829.3L1659 815.3L1649.7 803.6L1632.2 807.1L1629.9 814.1L1615.9 817.6L1613.6 814.1L1583.3 821.1L1575.1 830.4L1575.1 839.8L1585.6 840.9L1601.9 841.6L1583.3 845.6L1598.4 853.7L1577.5 860.7L1592.6 863L1597.3 875.9L1610.1 870L1618.2 877L1632.2 880.5L1650.8 891L1668.3 887.5L1664.8 893.3L1684.6 896.8L1677.6 905L1683.4 912L1697.4 909.6L1713.7 915.5L1696.3 914.3L1695.1 921.3L1702.1 927.1L1696.3 935.3L1696.3 939.9L1709.1 952.7L1711.4 962L1727.7 971.4L1742.8 976L1742.8 986.5L1745.2 993.5L1741.7 1009.8L1737 1014.4L1744 1023.8L1745.2 1024L1755.7 1032.7L1764.5 1050.2L1768 1065.9L1761 1053.7L1752.2 1039.7L1743.5 1029.2L1738.3 1039.7L1738.3 1060.7L1736.5 1076.4L1743.5 1079.9L1736.5 1086.9L1734.8 1109.6L1731.3 1130.6L1726 1149.8L1719 1162L1713.8 1165.5L1726 1170.7L1729.5 1183L1745.2 1186.5L1759.2 1191.7L1766.2 1198.7L1780.2 1202.2L1792.4 1207.4L1804.6 1203.9L1822.1 1205.7L1823.9 1196.9L1839.6 1198.7L1857 1205.7L1872.8 1210.9L1881.5 1224.9L1899 1223.2L1909.5 1226.6L1923.4 1221.4L1907.8 1229.3L1917.1 1223L1926.4 1219.9L1934.9 1222.3L1930.3 1212.2L1929.5 1202.9L1926.4 1197.4L1931.1 1188.9L1933.4 1181.1L1941.9 1171.8L1954.3 1165.6L1965.2 1157.8L1973 1153.2L1980.7 1153.9L1987 1158.6L1999.4 1160.2L2002.5 1165.6L2007.1 1163.3L2006.4 1152.4L2009.5 1160.9L2022.7 1159.4L2030.4 1158.6L2021.1 1153.9L2028.9 1157L2024.2 1165.6L2033.5 1166.4L2037.4 1173.4L2049.1 1175.7L2061.5 1181.9L2078.6 1178L2094.1 1173.4L2094.9 1167.1L2103.4 1160.9L2114.3 1153.2L2122 1144.6L2132.9 1134.5L2139.1 1125.2L2141.5 1117.5L2137.6 1114.3L2128.3 1118.2L2114.3 1109.7L2106.5 1101.9L2103.4 1091.1L2108.1 1080.2L2112 1072.4L2101.9 1066.2L2095.7 1060L2114.2 1046.7L2117.7 1036.2L2119 1036.1L2107.4 1021.4L2102.7 1009.8L2112 1000.5L2105 993.5L2102.7 979.5L2098 967.9L2086.4 967.9L2078.2 974.8L2074.8 986.5L2064.3 987.7L2068.9 979.5L2072.4 970.2L2070.1 958.5L2079.4 949.2L2091.1 935.3L2107.4 923.6L2112 910.8L2107.4 905L2112 896.8L2119 900.3L2128.3 899.1L2137.6 888.7L2135.3 872.4L2138.3 866.1L2136 856.8L2143 842.8L2148.8 824.2L2153.5 812.5L2162.8 800.9L2165.1 796.2L2153.5 792.7L2141.8 791.6L2127.9 782.2L2116.2 785.7L2110.4 779.9L2104.6 783.4L2095.3 775.3L2089.4 764.8L2083.6 757.8L2087.1 749.6L2088.3 739.1L2081.3 735.7L2074.3 728.7L2070.8 719.3L2072 710L2076.6 704.2L2084.8 700.7L2080.1 691.4L2077.8 680.9L2069.6 675.1L2065 668.1L2065 656.5L2064.6 655.1L2058.4 653.5L2059.9 648.1L2066.9 646.5L2070 643.4L2067.7 638.8L2071.6 634.1L2076.2 629.4L2077 621.7L2072.4 611.6L2068.5 604.6L2063 598.4L2064.6 593L2069.3 587.5L2081.7 589.8L2091 588.3L2100.3 586L2103.4 580.5L2098 578.2L2098.8 573.5L2106.5 567.3L2112.7 559.6L2115.1 550.2L2109.6 545.6L2099.5 544L2096.4 537.8L2098.8 533.2L2108.1 531.6L2115.8 528.5L2117.4 514.5L2120.5 502.1Z" fill="#7399d1" stroke="#000" stroke-width="2.6" stroke-linejoin="round"/>
<path d="M2038.2 499.8L2028.9 503.7L2024.2 511.4L2025.8 519.2L2030.4 527L2021.1 531.6L2020.3 534.7L2024.2 545.6L2030.4 547.1L2039.8 540.9L2047.5 536.3L2055.3 537L2058.4 544L2060.7 540.9L2058.4 533.2L2049.1 531.6L2046 526.2L2049.1 519.2L2053 516.1L2049.1 515.3L2042.9 517.6L2039.8 513Z" fill="#3f3f42" stroke="#000" stroke-width="2.6" stroke-linejoin="round"/>
<path d="M2006.4 500.6L2008.7 494.3L2014.9 490.5L2016.5 493.6L2012.6 502.1L2007.9 505.2Z" fill="#7399d1" stroke="#000" stroke-width="2.5" stroke-linejoin="round"/>
<path d="M2028.1 477.3L2045.2 469.5L2046 471.1L2028.9 478.8Z" fill="#7399d1" stroke="#000" stroke-width="2" stroke-linejoin="round"/>
<path d="M2219.9 1187.3L2223.8 1196.6L2222.2 1202.9L2225.3 1213.7L2227.6 1227.7L2225.3 1241.7L2219.9 1257.2L2216.8 1269.6L2212 1287.8L2202.8 1280.5L2194.3 1275.8L2195 1266.5L2188.8 1261.9L2190.4 1255.7L2184.2 1251L2187.3 1243.2L2183.4 1235.5L2188 1232.4L2183.4 1227.7L2184.2 1221.5L2191.9 1213L2204.3 1208.3L2216 1204.4Z" fill="#7399d1" stroke="#000" stroke-width="2.6" stroke-linejoin="round"/>
<path d="M1643.9 905L1652 910.8L1645 909.6Z" fill="#7399d1" stroke="#000" stroke-width="2" stroke-linejoin="round"/>
<path d="M1721.9 980.7L1733.5 983.7L1734.7 986L1723 983Z" fill="#7399d1" stroke="#000" stroke-width="2" stroke-linejoin="round"/>
<path d="M1728.9 994.6L1739.3 1007.5L1737 1009.8L1727.7 997Z" fill="#7399d1" stroke="#000" stroke-width="2" stroke-linejoin="round"/>
<path d="M1946.6 625.6L1945.8 632.5L1949.7 636.4L1953.6 634.1L1962.1 636.4L1971.4 638L1980.7 631.8L1987 628.7L1989.3 633.3L1987.7 625.6L1989.3 623.2L1993.2 618.6L1999.4 620.9L2007.1 615.5L2010.2 620.1L2013.4 618.6L2018 623.2L2022.7 617L2025.8 626.3L2030.4 632.5L2039.8 632.5L2049.1 638.8L2056.8 641.1L2054.5 654.3L2053.3 651.8L2054.5 656.5L2048.7 663.4L2051 669.3L2065 668.8" fill="none" stroke="#000" stroke-width="2.4" stroke-linejoin="round"/>
<path d="M1907.7 647.6L1910.1 663.4L1922.9 673.9L1938 668.1L1941.5 686.7L1954.3 689.1L1962.5 698.4L1976.5 700.7L1982.3 706.5L1980 726.3L1995.1 727.5L2004.4 724L2009.1 713.5L2013.7 713.5L2012.6 726.3L2014.9 738L2020.7 738L2037 748.5L2046.3 753.1L2058 757.8L2067.3 763.6L2083.6 760.1" fill="none" stroke="#000" stroke-width="2.4" stroke-linejoin="round"/>
<path d="M2070.8 712.4L2066.1 711.7L2058 724L2053.3 733.3L2058 742.6L2055.7 749.6L2058 757.8" fill="none" stroke="#000" stroke-width="2.4" stroke-linejoin="round"/>
<g font-family="'Liberation Sans',sans-serif"><text class="lc" x="1484.9" y="389.5" font-size="22" textLength="73.3" lengthAdjust="spacing">Belfast</text><text class="lc" x="1689.2" y="443.6" font-size="22" textLength="64.6" lengthAdjust="spacing">Leeds</text><text class="lc" x="1464.1" y="488.0" font-size="28" textLength="87.3" lengthAdjust="spacing">Dublin</text><text class="lc" x="1624.0" y="484.5" font-size="22" textLength="130.7" lengthAdjust="spacing">Manchester</text><text class="lc" x="1637.9" y="552.0" font-size="22" textLength="136.1" lengthAdjust="spacing">Birmingham</text><text class="lc" x="1610.7" y="625.3" font-size="22" textLength="72.7" lengthAdjust="spacing">Cardiff</text><text class="lb" x="1867.2" y="814.0" font-size="26" textLength="62.5" lengthAdjust="spacing">Paris</text><text class="lc" x="2193.4" y="471.6" font-size="22" textLength="106.7" lengthAdjust="spacing">Hamburg</text><text class="lb" x="1942.9" y="559.6" font-size="26" textLength="143.3" lengthAdjust="spacing">Amsterdam</text><text class="lb" x="1932.0" y="592.0" font-size="22" textLength="118.5" lengthAdjust="spacing">The Hague</text><text class="lc" x="2364.3" y="550.9" font-size="26" textLength="72.3" lengthAdjust="spacing">Berlin</text><text class="lc" x="2699.3" y="571.2" font-size="26" textLength="99.0" lengthAdjust="spacing">Warsaw</text><text class="lc" x="2062.4" y="665.5" font-size="22" textLength="93.0" lengthAdjust="spacing">Cologne</text><text class="lb" x="1933.9" y="673.2" font-size="26" textLength="105.1" lengthAdjust="spacing">Brussels</text><text class="lc" x="2135.1" y="711.6" font-size="22" textLength="103.3" lengthAdjust="spacing">Frankfurt</text><text class="lc" x="2138.4" y="737.1" font-size="22" textLength="97.8" lengthAdjust="spacing">am Main</text><text class="lb" x="1990.5" y="761.6" font-size="26" textLength="160.3" lengthAdjust="spacing">Luxembourg</text><text class="lc" x="2231.2" y="770.3" font-size="22" textLength="130.7" lengthAdjust="spacing">Nuremberg</text><text class="lc" x="2404.9" y="726.6" font-size="26" textLength="91.3" lengthAdjust="spacing">Prague</text><text class="lc" x="2607.8" y="715.0" font-size="22" textLength="101.3" lengthAdjust="spacing">Katowice</text><text class="lc" x="2155.0" y="819.0" font-size="22" textLength="97.2" lengthAdjust="spacing">Stuttgart</text><text class="lc" x="2488.6" y="849.0" font-size="26" textLength="84.0" lengthAdjust="spacing">Vienna</text><text class="lc" x="2516.7" y="871.6" font-size="26" textLength="119.8" lengthAdjust="spacing">Bratislava</text><text class="lc" x="2278.2" y="871.6" font-size="22" textLength="82.0" lengthAdjust="spacing">Munich</text><text class="lc" x="3007.9" y="446.0" font-size="26" textLength="75.5" lengthAdjust="spacing">Minsk</text><text class="lc" x="3522.4" y="613.0" font-size="22" textLength="108.0" lengthAdjust="spacing">Voronezh</text><text class="lc" x="3153.6" y="701.5" font-size="26" textLength="54.5" lengthAdjust="spacing">Kiev</text><text class="lc" x="3399.5" y="731.9" font-size="22" textLength="83.0" lengthAdjust="spacing">Kharkiv</text><text class="lc" x="2862.8" y="743.0" font-size="22" textLength="44.9" lengthAdjust="spacing">Lviv</text><text class="lc" x="3347.1" y="840.2" font-size="22" textLength="78.5" lengthAdjust="spacing">Dnipro</text><text class="lc" x="3467.2" y="864.0" font-size="22" textLength="90.3" lengthAdjust="spacing">Donetsk</text><text class="lc" x="1622.9" y="1179.5" font-size="22" textLength="70.8" lengthAdjust="spacing">Bilbao</text><text class="lb" x="1806.9" y="1160.3" font-size="22" textLength="104.1" lengthAdjust="spacing">Toulouse</text><text class="lc" x="1368.9" y="1309.5" font-size="22" textLength="62.8" lengthAdjust="spacing">Porto</text><text class="lc" x="1575.9" y="1354.0" font-size="26" textLength="93.5" lengthAdjust="spacing">Madrid</text><text class="lc" x="1835.0" y="1295.5" font-size="22" textLength="109.0" lengthAdjust="spacing">Barcelona</text><text class="lc" x="2146.7" y="914.0" font-size="22" textLength="70.2" lengthAdjust="spacing">Zurich</text><text class="lc" x="2600.5" y="905.2" font-size="26" textLength="118.3" lengthAdjust="spacing">Budapest</text><text class="lc" x="2387.9" y="995.0" font-size="26" textLength="112.1" lengthAdjust="spacing">Ljubljana</text><text class="lc" x="2475.0" y="1025.0" font-size="26" textLength="86.8" lengthAdjust="spacing">Zagreb</text><text class="lb" x="1985.9" y="1022.3" font-size="22" textLength="53.5" lengthAdjust="spacing">Lyon</text><text class="lc" x="2176.8" y="1039.7" font-size="24" textLength="64.0" lengthAdjust="spacing">Milan</text><text class="lc" x="2115.5" y="1067.7" font-size="22" textLength="56.7" lengthAdjust="spacing">Turin</text><text class="lc" x="2666.6" y="1076.4" font-size="26" textLength="112.6" lengthAdjust="spacing">Belgrade</text><text class="lc" x="2578.4" y="1142.8" font-size="26" textLength="107.1" lengthAdjust="spacing">Sarajevo</text><text class="lb" x="2076.9" y="1148.0" font-size="26" textLength="104.8" lengthAdjust="spacing">Monaco</text><text class="lb" x="1985.9" y="1187.0" font-size="22" textLength="102.1" lengthAdjust="spacing">Marseille</text><text class="lc" x="2719.6" y="1211.0" font-size="22" textLength="82.9" lengthAdjust="spacing">Pristina</text><text class="lc" x="2601.9" y="1237.0" font-size="26" textLength="128.9" lengthAdjust="spacing">Podgorica</text><text class="lc" x="2726.1" y="1258.0" font-size="26" textLength="83.7" lengthAdjust="spacing">Skopje</text><text class="lc" x="2322.4" y="1265.0" font-size="26" textLength="75.3" lengthAdjust="spacing">Rome</text><text class="lc" x="2658.4" y="1307.0" font-size="26" textLength="72.4" lengthAdjust="spacing">Tirana</text><text class="lc" x="2537.9" y="1310.5" font-size="22" textLength="42.5" lengthAdjust="spacing">Bari</text><text class="lc" x="2401.7" y="1329.0" font-size="22" textLength="77.7" lengthAdjust="spacing">Naples</text><text class="lc" x="2774.0" y="1340.2" font-size="22" textLength="132.7" lengthAdjust="spacing">Thessaloniki</text><text class="lc" x="3050.5" y="937.7" font-size="26" textLength="104.2" lengthAdjust="spacing">Kishinev</text><text class="lc" x="3157.0" y="977.5" font-size="22" textLength="69.6" lengthAdjust="spacing">Odesa</text><text class="lc" x="3513.7" y="923.7" font-size="22" textLength="172.7" lengthAdjust="spacing">Rostov-on-Don</text><text class="lc" x="2915.9" y="1106.8" font-size="26" textLength="126.3" lengthAdjust="spacing">Bucharest</text><text class="lc" x="2823.8" y="1214.4" font-size="26" textLength="58.2" lengthAdjust="spacing">Sofia</text><text class="lc" x="3060.6" y="1308.8" font-size="26" textLength="100.1" lengthAdjust="spacing">Istanbul</text><text class="lc" x="3084.0" y="1366.4" font-size="22" textLength="61.0" lengthAdjust="spacing">Bursa</text><text class="lc" x="3244.7" y="1382.0" font-size="26" textLength="85.7" lengthAdjust="spacing">Ankara</text></g>
<rect x="1066" y="416" width="64" height="128" fill="#fff"/><rect x="1066" y="479.500" width="64" height="2" fill="#d4d4d4"/><path d="M1082.500 447.500H1112M1097.200 433V462M1082.500 512.300H1112" stroke="#5a5a5a" stroke-width="2.200" fill="none"/>
<rect x="1036" y="1353" width="2688" height="31" fill="#fff" fill-opacity=".8"/>
<g font-family="'Liberation Sans',sans-serif" fill="#474747" font-size="23"><text x="1047.200" y="1377.200" textLength="405" lengthAdjust="spacing">Esri, HERE, Garmin, USGS | Esri, HERE</text><text x="3541" y="1377.200" textLength="172" lengthAdjust="spacing">Powered by Esri</text></g></svg></div>
<span class="t" style="left:212.6px;top:58.7px;font-size:66px;letter-spacing:3.12px;color:#fff;">inorigo</span>
<span class="t" style="left:428.5px;top:65.5px;font-size:13px;color:#fff;">®</span>
<span class="t" style="left:1752.6px;top:72.3px;font-size:54px;letter-spacing:1.09px;color:#fff;">Market Overview</span>
<span class="t" style="left:130.3px;top:244.7px;font-size:32px;letter-spacing:1.1px;font-weight:700;">Market Overview</span>
<span class="t" style="left:535.5px;top:244.5px;font-size:32.5px;letter-spacing:0.33px;">Local Market Segments</span>
<span class="t" style="left:1018.1px;top:244.5px;font-size:32.5px;letter-spacing:0.29px;color:#6c7a8d;">Sales District Representatives</span>
<span class="t" style="left:172.4px;top:348.0px;font-size:27px;letter-spacing:0.01px;font-weight:700;">Country</span>
<span class="t" style="left:1084.3px;top:1437.1px;font-size:27px;letter-spacing:-0.19px;font-weight:700;">Market Area</span>
<span class="t" style="left:1996.6px;top:1437.1px;font-size:27px;font-weight:700;transform:scaleX(0.9494);transform-origin:0 50%;">Sales Area</span>
<span class="t" style="left:2859.7px;top:1437.1px;font-size:27px;letter-spacing:-0.15px;font-weight:700;">Sales Structure</span>
<span class="t" style="left:234.4px;top:429.3px;font-size:23px;letter-spacing:1.23px;">Belgium</span>
<span class="t" style="left:234.4px;top:493.3px;font-size:23px;letter-spacing:0.34px;">France</span>
<span class="t" style="left:234.4px;top:557.3px;font-size:23px;letter-spacing:1.25px;">Luxembourg</span>
<span class="t" style="left:234.4px;top:621.3px;font-size:23px;letter-spacing:1.1px;">Netherlands</span>
<span class="t" style="left:236.3px;top:685.3px;font-size:23px;letter-spacing:0.6px;color:#676767;">Andorra</span>
<span class="t" style="left:236.3px;top:749.3px;font-size:23px;letter-spacing:0.44px;color:#676767;">Austria</span>
<span class="t" style="left:234.4px;top:813.3px;font-size:23px;letter-spacing:1.16px;color:#676767;">Denmark</span>
<span class="t" style="left:234.4px;top:877.3px;font-size:23px;letter-spacing:1.09px;color:#676767;">England</span>
<span class="t" style="left:234.4px;top:941.3px;font-size:23px;letter-spacing:1.34px;color:#676767;">Finland</span>
<span class="t" style="left:235.1px;top:1005.3px;font-size:23px;letter-spacing:0.72px;color:#676767;">Germany</span>
<span class="t" style="left:235.1px;top:1069.3px;font-size:23px;letter-spacing:1.0px;color:#676767;">Gibraltar</span>
<span class="t" style="left:234.2px;top:1133.3px;font-size:23px;letter-spacing:1.43px;color:#676767;">Ireland</span>
<span class="t" style="left:234.4px;top:1197.3px;font-size:23px;letter-spacing:1.33px;color:#676767;">Norway</span>
<span class="t" style="left:234.4px;top:1261.3px;font-size:23px;letter-spacing:1.24px;color:#676767;">Portugal</span>
<span class="t" style="left:235.3px;top:1325.3px;font-size:23px;letter-spacing:0.99px;color:#676767;">Scotland</span>
<span class="t" style="left:235.3px;top:1389.3px;font-size:23px;letter-spacing:0.83px;color:#676767;">Spain</span>
<span class="t" style="left:235.3px;top:1453.3px;font-size:23px;letter-spacing:0.96px;color:#676767;">Sweden</span>
<span class="t" style="left:235.3px;top:1517.3px;font-size:23px;letter-spacing:1.11px;color:#676767;">Switzerland</span>
<span class="t" style="left:236.2px;top:1581.3px;font-size:23px;letter-spacing:0.02px;color:#676767;">Wales</span>
<span class="t" style="left:1104.9px;top:1519.3px;font-size:23px;letter-spacing:0.85px;">Belgium, Netherlands, Luxembourg</span>
<span class="t" style="left:1104.9px;top:1583.3px;font-size:23px;letter-spacing:0.58px;">France</span>
<span class="t" style="left:1105.6px;top:1647.3px;font-size:23px;letter-spacing:0.43px;">Central Europe West</span>
<span class="t" style="left:1105.6px;top:1711.3px;font-size:23px;letter-spacing:0.41px;">Germany MID</span>
<span class="t" style="left:1105.6px;top:1775.3px;font-size:23px;letter-spacing:0.77px;">Great Britain</span>
<span class="t" style="left:1104.7px;top:1839.3px;font-size:23px;letter-spacing:1.08px;">Iberica</span>
<span class="t" style="left:1104.7px;top:1903.3px;font-size:23px;letter-spacing:1.5px;">Ireland</span>
<span class="t" style="left:1104.9px;top:1967.3px;font-size:23px;letter-spacing:1.52px;">Nordic</span>
<span class="t" style="left:1105.8px;top:2031.3px;font-size:23px;letter-spacing:0.66px;">Switzerland West</span>
<span class="t" style="left:2017.3px;top:1519.3px;font-size:23px;transform:scaleX(0.9213);transform-origin:0 50%;">FRA</span>
<span class="t" style="left:2017.1px;top:1583.3px;font-size:23px;letter-spacing:0.55px;color:#676767;">BNL</span>
<span class="t" style="left:2017.9px;top:1647.3px;font-size:23px;color:#676767;transform:scaleX(0.8994);transform-origin:0 50%;">CEE</span>
<span class="t" style="left:2017.9px;top:1711.3px;font-size:23px;color:#676767;transform:scaleX(0.9022);transform-origin:0 50%;">CEW</span>
<span class="t" style="left:2017.2px;top:1775.3px;font-size:23px;color:#676767;transform:scaleX(0.9473);transform-origin:0 50%;">DCGM</span>
<span class="t" style="left:2017.3px;top:1839.3px;font-size:23px;color:#676767;transform:scaleX(0.9153);transform-origin:0 50%;">ESE</span>
<span class="t" style="left:2017.3px;top:1903.3px;font-size:23px;color:#676767;transform:scaleX(0.9162);transform-origin:0 50%;">ESW</span>
<span class="t" style="left:2017.9px;top:1967.3px;font-size:23px;color:#676767;transform:scaleX(0.9621);transform-origin:0 50%;">GNT</span>
<span class="t" style="left:2017.9px;top:2031.3px;font-size:23px;color:#676767;transform:scaleX(0.9416);transform-origin:0 50%;">GRB</span>
<span class="t" style="left:3004.1px;top:1510.1px;font-size:23.5px;letter-spacing:0.15px;">Sales Domain</span>
<span class="t" style="left:3044.1px;top:1558.1px;font-size:23.5px;letter-spacing:-0.33px;">Sales Area</span>
<span class="t" style="left:3084.1px;top:1606.1px;font-size:23.5px;letter-spacing:0.23px;">Sales Division</span>
<span class="t" style="left:3124.1px;top:1654.1px;font-size:23.5px;letter-spacing:0.22px;">Sales District</span>
<div class="abs" style="left:800px;top:313px;width:506px;height:123px;background:rgba(221,221,224,.97);box-shadow:0 2px 6px rgba(0,0,0,.28),0 0 1px rgba(0,0,0,.35)"></div>
<svg style="left:812px;top:270px" width="34" height="36" viewBox="0 0 34 36"><path d="M8.500 2.200c1.700-.8 3.500.1 4.200 1.900l3.300 9.200c.6-1.300 2.900-1.800 4.100-.2 1.200-1.200 3.500-1 4.300.8 1.500-.9 3.600-.2 4.200 1.800l1.900 6.500c.8 2.800.3 5.200-.9 7.500l-1.300 2.800-12.800 1.800c-1.600-2.400-3.900-4.600-7.100-6.800-2.200-1.500-4.700-2.600-5.700-4.500-.8-1.700.7-3.500 2.700-3.200 1.900.3 3.600 1.300 5.100 2.600L6.300 6.400c-.6-1.700.3-3.500 2.200-4.200z" fill="#fff" stroke="#000" stroke-width="2" stroke-linejoin="round"/><path d="M18.500 23.500l1.500 6.500M22.300 22.800l1.400 6.500M26 22l1.200 6.300" stroke="#000" stroke-width="1.800" stroke-linecap="round"/></svg>
<span class="t" style="left:810.8px;top:321.8px;font-size:21.5px;letter-spacing:0.96px;color:#3b3b3d;">Local Market Segments provides an overview</span>
<span class="t" style="left:811.7px;top:349.5px;font-size:21.5px;letter-spacing:1.2px;color:#3b3b3d;">of target customer groups within specific</span>
<span class="t" style="left:811.2px;top:377.2px;font-size:21.5px;letter-spacing:1.02px;color:#3b3b3d;">regions, helping you tailor campaigns to local</span>
<span class="t" style="left:811.2px;top:404.9px;font-size:21.5px;letter-spacing:1.17px;color:#3b3b3d;">needs and opportunities.</span>
</div>
</body></html>
